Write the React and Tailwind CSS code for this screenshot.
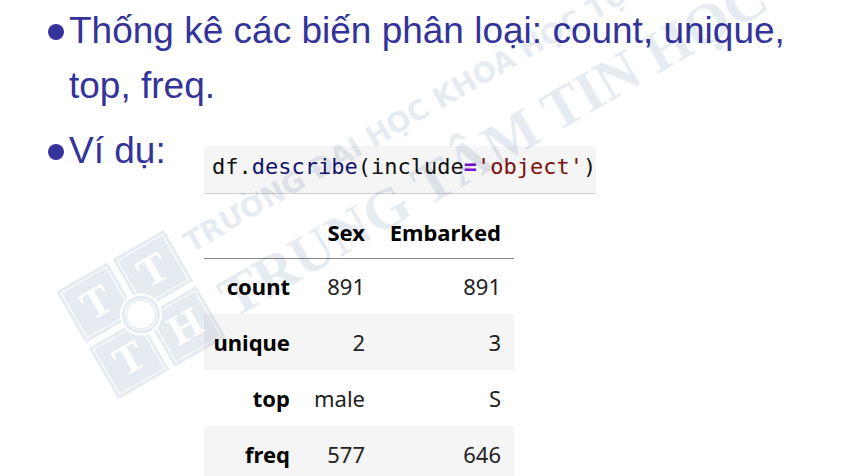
const columns = ["Sex", "Embarked"];

const rows = [
  { label: "count", values: ["891", "891"] },
  { label: "unique", values: ["2", "3"] },
  { label: "top", values: ["male", "S"] },
  { label: "freq", values: ["577", "646"] },
];

function Bullet() {
  return <span aria-hidden="true" className="mt-[21px] size-4 shrink-0 rounded-full bg-[#333399]" />;
}

function Code() {
  return (
    <pre className="border-b border-[#cfcfcf] bg-[#f5f5f5] pt-1 pb-[9px] pl-2 font-['DejaVu_Sans_Mono',monospace] text-[22px] leading-[34px] text-[#111]">
      <code className="font-['DejaVu_Sans_Mono',monospace]">
        df.<span className="text-[#12126e]">describe</span>(include
        <span className="font-bold text-[#7a12d0]">=</span>
        <span className="text-[#7c1010]">'object'</span>)
      </code>
    </pre>
  );
}

function SummaryTable() {
  return (
    <table className="mt-3 w-[310px] border-collapse text-right font-['Noto_Sans',sans-serif] text-[22px] leading-[30px] text-[#222]">
      <thead>
        <tr className="h-[52px] border-b border-[#888]">
          <td className="w-[99px]" />
          {columns.map((name) => (
            <th key={name} scope="col" className="pr-[13px] font-bold text-black first-of-type:w-[75px]">
              {name}
            </th>
          ))}
        </tr>
      </thead>
      <tbody>
        {rows.map((row) => (
          <tr key={row.label} className="h-14 even:bg-[#f5f5f5]">
            <th scope="row" className="pr-[13px] font-bold text-black">
              {row.label}
            </th>
            {row.values.map((value, i) => (
              <td key={columns[i]} className="pr-[13px]">
                {value}
              </td>
            ))}
          </tr>
        ))}
      </tbody>
    </table>
  );
}

// One tile of the TTTH mark, drawn from its own top-left corner.
function Tile({ x, y, letter }) {
  return (
    <g transform={`translate(${x} ${y})`}>
      <rect width="59" height="59" fill="#003070" />
      <rect x="3.5" y="3.5" width="52" height="52" fill="none" stroke="#fff" strokeWidth="1" />
      <text x="29.5" y="43" textAnchor="middle" fontSize="42" fill="#fff" className="font-['Liberation_Serif',serif] font-bold">
        {letter}
      </text>
    </g>
  );
}

function Watermark() {
  return (
    <svg
      aria-hidden="true"
      width="860"
      height="476"
      viewBox="0 0 860 476"
      className="pointer-events-none absolute top-0 left-0 opacity-10 mix-blend-multiply"
    >
      <g transform="translate(141 314.5) rotate(-30)">
        <Tile x={-62} y={-62} letter="T" />
        <Tile x={3} y={-62} letter="T" />
        <Tile x={-62} y={3} letter="T" />
        <Tile x={3} y={3} letter="H" />
        <circle r="21" fill="#fff" />
        <circle r="17.5" fill="none" stroke="#003070" strokeWidth="3" />
        <circle r="14.5" fill="none" stroke="#003070" strokeWidth="1.5" />
      </g>
      <g transform="rotate(-30)" fill="#003070">
        <text x="39" y="315" fontSize="28" className="font-['DejaVu_Sans',sans-serif] font-bold">
          TRƯỜNG ĐẠI HỌC KHOA HỌC TỰ
        </text>
        <text x="43" y="393" fontSize="58" className="font-['Liberation_Serif',serif] font-bold">
          TRUNG TÂM TIN HỌC
        </text>
      </g>
    </svg>
  );
}

export default function App() {
  return (
    <main className="relative h-screen overflow-hidden bg-white font-['Liberation_Sans',sans-serif] text-[37px] leading-[55px] text-[#333399]">
      <ul className="flex flex-col gap-2.5 pt-[3px] pl-12">
        <li className="flex gap-[5px]">
          <Bullet />
          <p className="max-w-[740px]">Thống kê các biến phân loại: count, unique, top, freq.</p>
        </li>
        <li className="flex gap-[5px]">
          <Bullet />
          <p className="w-[130px]">Ví dụ:</p>
          <div className="pt-[23px]">
            <Code />
            <SummaryTable />
          </div>
        </li>
      </ul>
      <Watermark />
    </main>
  );
}
